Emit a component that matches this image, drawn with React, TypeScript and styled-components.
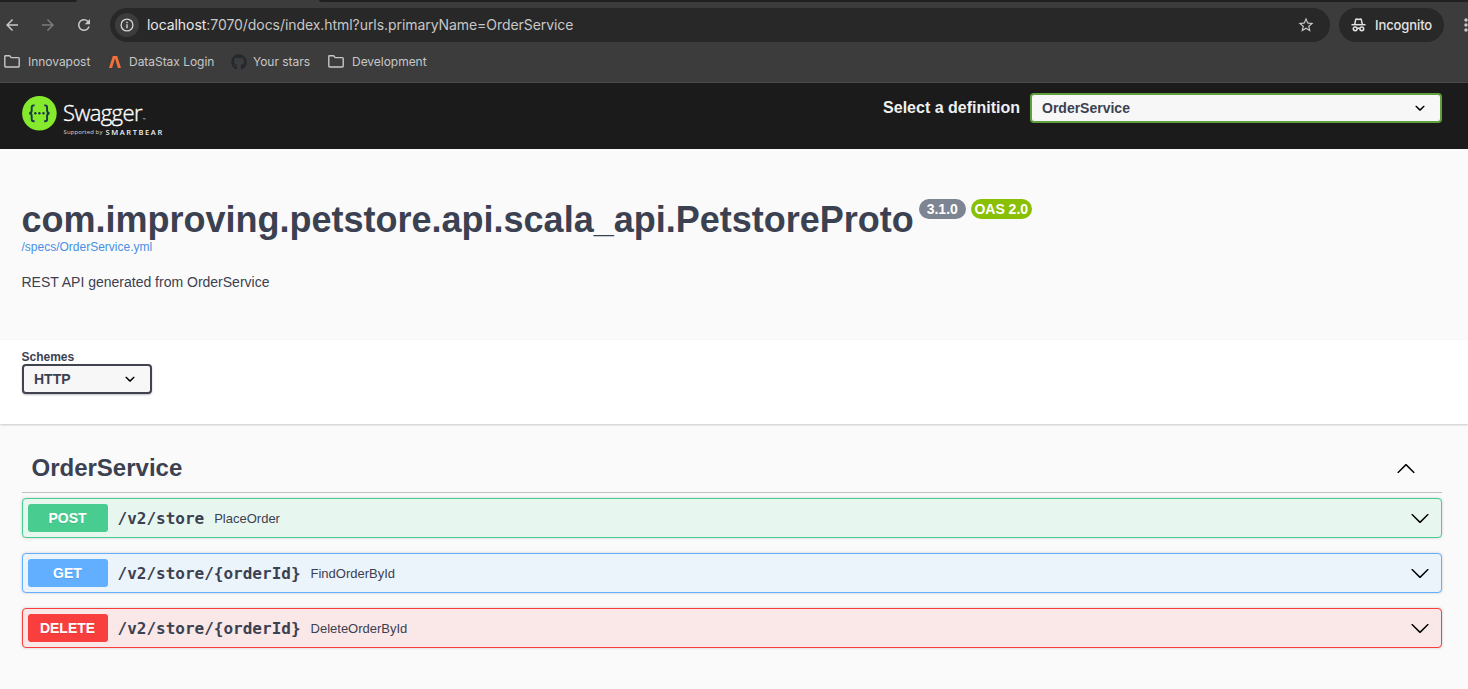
import React from "react";
import styled, { createGlobalStyle } from "styled-components";
import { FaGithub } from "react-icons/fa";
import { MdArrowBack, MdArrowForward, MdMoreVert, MdRefresh, MdStarBorder } from "react-icons/md";

const GlobalStyle = createGlobalStyle`
  *, *::before, *::after { box-sizing: border-box; }
  body {
    margin: 0;
    background: #fafafa;
    color: #3b4151;
    font-family: "Liberation Sans", Arial, sans-serif;
    overflow: hidden;
  }
  svg { display: block; flex: none; }
`;

const Page = styled.div`
  height: 689px;
  width: 1468px;
  overflow: hidden;
  display: flex;
  flex-direction: column;
`;

/* ---------- browser chrome ---------- */

const Chrome = styled.div`
  background: #3c3c3c;
  height: 83px;
  border-bottom: 1px solid #4b4b4b;
  color: #c7c7c7;
  font-family: Inter, Roboto, sans-serif;
  flex: none;
`;

const TabStrip = styled.div`
  display: flex;
  justify-content: space-between;
  height: 2px;
`;

const TabEdge = styled.div<{ $width: number; $side: "left" | "right" }>`
  width: ${(p) => p.$width}px;
  background: #202020;
  border-radius: ${(p) => (p.$side === "left" ? "0 0 4px 0" : "0 0 0 4px")};
`;

const Toolbar = styled.div`
  display: flex;
  align-items: center;
  height: 46px;
`;

const NavIcon = styled.span<{ $left: number; $dim?: boolean }>`
  flex: none;
  margin-left: ${(p) => p.$left}px;
  color: ${(p) => (p.$dim ? "#7b7b7b" : "#c7c7c7")};
`;

const AddressBar = styled.div`
  display: flex;
  flex: none;
  align-items: center;
  width: 1220px;
  height: 34px;
  margin-left: 17px;
  padding: 0 15px 0 5px;
  border-radius: 17px;
  background: #282828;
`;

const InfoBadge = styled.span`
  display: grid;
  place-items: center;
  width: 24px;
  height: 24px;
  border-radius: 50%;
  background: #3c3c3c;
`;

const Url = styled.span`
  flex: 1;
  margin-left: 8px;
  padding-bottom: 1px;
  font-size: 14px;
  letter-spacing: -0.06px;
  white-space: nowrap;
  b { font-weight: 400; color: #e8e8e8; }
`;

const IncognitoPill = styled.div`
  display: flex;
  flex: none;
  align-items: center;
  gap: 9px;
  width: 105px;
  height: 34px;
  margin-left: 9px;
  padding-left: 12px;
  border-radius: 17px;
  background: #282828;
  color: #e3e3e3;
  font-size: 13px;
  font-weight: 500;
  letter-spacing: -0.1px;
`;

const Bookmarks = styled.div`
  display: flex;
  align-items: center;
  height: 27px;
  padding-left: 4px;
`;

const Bookmark = styled.div<{ $width: number; $gap: number }>`
  display: flex;
  align-items: center;
  gap: ${(p) => p.$gap}px;
  width: ${(p) => p.$width}px;
  font-size: 12px;
  letter-spacing: -0.03px;
  white-space: nowrap;
`;

/* ---------- swagger ---------- */

const Topbar = styled.header`
  display: flex;
  justify-content: space-between;
  height: 66px;
  padding: 10px 26px 0 22px;
  background: #1b1b1b;
  flex: none;
`;

const Brand = styled.div`
  display: flex;
  padding-top: 3px;
`;

const BrandText = styled.div`
  display: flex;
  flex-direction: column;
  margin-left: 6px;
  padding-top: 1px;
  color: #fff;
  font-family: "Open Sans", sans-serif;
`;

const BrandName = styled.div`
  height: 31px;
  font-size: 22px;
  line-height: 30px;
  font-weight: 300;
  letter-spacing: -0.6px;
  -webkit-text-stroke: 0.35px #fff;
  white-space: nowrap;
  small { margin-left: 1px; font-size: 4px; letter-spacing: 0; -webkit-text-stroke: 0; }
`;

const BrandBy = styled.div`
  display: flex;
  align-items: center;
  height: 8px;
  padding-left: 0.5px;
  font-size: 6px;
  line-height: 8px;
  letter-spacing: 0.1px;
  white-space: nowrap;
  color: #d8d8d8;
  b { margin-left: 3px; font-size: 7.5px; letter-spacing: 1.6px; font-weight: 600; color: #f2f2f2; }
`;

const Definition = styled.label`
  display: flex;
  align-items: flex-start;
  gap: 10px;
  color: #f0f0f0;
  font-size: 16px;
  font-weight: 700;
  line-height: 29px;
  white-space: nowrap;
`;

const SelectBox = styled.div<{ $width: number; $border: string; $shadow?: boolean }>`
  display: flex;
  align-items: center;
  justify-content: space-between;
  width: ${(p) => p.$width}px;
  height: 30px;
  padding: 0 10px;
  border: 2px solid ${(p) => p.$border};
  border-radius: 4px;
  background: #f7f7f7;
  box-shadow: ${(p) => (p.$shadow ? "0 1px 2px rgba(0,0,0,.25)" : "none")};
  color: #3b4151;
  font-size: 14px;
  font-weight: 700;
  line-height: 26px;
`;

const Info = styled.section`
  height: 191px;
  padding: 50px 22px 0 21.5px;
  flex: none;
`;

const TitleRow = styled.div`
  display: flex;
  align-items: flex-start;
  height: 41px;
`;

const Title = styled.h2`
  margin: 0;
  font-size: 36px;
  line-height: 41px;
  font-weight: 700;
  white-space: nowrap;
`;

const Version = styled.span<{ $bg: string; $width: number; $left: number }>`
  width: ${(p) => p.$width}px;
  height: 20px;
  margin-left: ${(p) => p.$left}px;
  padding-right: 1px;
  border-radius: 10px;
  background: ${(p) => p.$bg};
  color: #fff;
  font-size: 14px;
  line-height: 20px;
  font-weight: 700;
  text-align: center;
  white-space: nowrap;
`;

const SpecLink = styled.a`
  display: block;
  height: 14px;
  color: #4990e2;
  font-size: 12px;
  line-height: 14px;
`;

const Description = styled.p`
  margin: 20px 0 0;
  font-size: 14px;
  line-height: 17px;
`;

const Schemes = styled.section`
  height: 84px;
  padding: 10px 22px 0;
  background: #fff;
  box-shadow: 0 1px 2px rgba(0, 0, 0, 0.2);
  flex: none;
`;

const SchemesLabel = styled.div`
  height: 14px;
  margin-left: -0.5px;
  font-size: 12px;
  line-height: 14px;
  font-weight: 700;
`;

const Operations = styled.main`
  padding: 20px 26px 0 22px;
`;

const TagHeader = styled.div`
  display: flex;
  align-items: center;
  justify-content: space-between;
  height: 49px;
  margin-bottom: 5px;
  padding: 0 26px 0 9.5px;
  border-bottom: 1px solid rgba(59, 65, 81, 0.3);
`;

const TagName = styled.h3`
  margin: 0;
  font-size: 24px;
  line-height: 28px;
`;

const OperationRow = styled.div<{ $color: string; $bg: string }>`
  display: flex;
  align-items: center;
  height: 40px;
  margin-bottom: 15px;
  padding: 0 11px 0 5px;
  border: 1px solid ${(p) => p.$color};
  border-radius: 4px;
  background: ${(p) => p.$bg};
  box-shadow: 0 0 3px rgba(0, 0, 0, 0.19);
`;

const Method = styled.span<{ $color: string }>`
  width: 80px;
  height: 28px;
  padding-right: 1px;
  border-radius: 3px;
  background: ${(p) => p.$color};
  color: #fff;
  font-size: 14px;
  line-height: 28px;
  font-weight: 700;
  text-align: center;
  text-shadow: 0 1px 0 rgba(0, 0, 0, 0.1);
`;

const Path = styled.span`
  margin-left: 9.5px;
  font-family: "DejaVu Sans Mono", monospace;
  font-size: 16px;
  font-weight: 700;
`;

const Summary = styled.span`
  flex: 1;
  margin-left: 10px;
  font-size: 13px;
`;

const FolderIcon = () => (
  <svg width="16" height="13" viewBox="0 0 16 13" fill="none" stroke="#c7c7c7" strokeWidth="1.4" strokeLinejoin="round">
    <path d="M.8 1.5Q.8.8 1.5.8H5.6L7.2 2.6H14.4Q15.2 2.6 15.2 3.4V11.3Q15.2 12 14.4 12H1.6Q.8 12 .8 11.3Z" />
  </svg>
);

const DataStaxIcon = () => (
  <svg width="12" height="12" viewBox="0 0 12 12">
    <path d="M0 12 3.8 0H8.2L12 12H8.9L6 2.3 3.1 12Z" fill="#f2703a" />
  </svg>
);

const InfoIcon = () => (
  <svg width="14" height="14" viewBox="0 0 14 14" fill="none" stroke="#d5d5d5">
    <circle cx="7" cy="7" r="5.9" strokeWidth="1.3" />
    <path d="M7 6.3V10.2M7 3.8V5.2" strokeWidth="1.4" />
  </svg>
);

const IncognitoIcon = () => (
  <svg width="15" height="14" viewBox="0 0 15 14" fill="none" stroke="#e3e3e3" strokeWidth="1.5">
    <path d="M.5 6.7H14.5" />
    <path d="M3.7 6.4 4.7 1.6Q4.9.8 5.6 1L7.5 1.5 9.4 1Q10.1.8 10.3 1.6L11.3 6.4" />
    <circle cx="4.2" cy="10.8" r="1.9" />
    <circle cx="10.8" cy="10.8" r="1.9" />
    <path d="M6 10.5Q7.5 9.8 9 10.5" />
  </svg>
);

const SwaggerMark = () => (
  <svg width="35" height="35" viewBox="0 0 35 35">
    <circle cx="17.4" cy="17.3" r="17.3" fill="#85ea2d" />
    <g fill="none" stroke="#173647" strokeWidth="1.9">
      <path d="M12.6 9.4H11.6Q9.7 9.4 9.7 11.4V14.6Q9.7 17.3 7.2 17.3 9.7 17.3 9.7 20V23.2Q9.7 25.3 11.6 25.3H12.6" />
      <path d="M22.2 9.4H23.2Q25.1 9.4 25.1 11.4V14.6Q25.1 17.3 27.6 17.3 25.1 17.3 25.1 20V23.2Q25.1 25.3 23.2 25.3H22.2" />
    </g>
    <g fill="#173647">
      <circle cx="13.3" cy="17.3" r="1.2" />
      <circle cx="17.4" cy="17.3" r="1.2" />
      <circle cx="21.5" cy="17.3" r="1.2" />
    </g>
  </svg>
);

const SelectArrow = () => (
  <svg width="20" height="20" viewBox="0 0 20 20">
    <path d="M13.418 7.859c.271-.268.709-.268.978 0 .27.268.272.701 0 .969l-3.908 3.83c-.27.268-.707.268-.979 0l-3.908-3.83c-.27-.267-.27-.701 0-.969.271-.268.709-.268.978 0L10 11l3.418-3.141z" />
  </svg>
);

const LargeArrow = ({ up = false }: { up?: boolean }) => (
  <svg width="20" height="20" viewBox="0 0 20 20">
    <path
      transform={up ? "rotate(180 10 10.5)" : undefined}
      d="M17.418 6.109c.272-.268.709-.268.979 0s.271.701 0 .969l-7.908 7.83c-.27.268-.707.268-.979 0l-7.908-7.83c-.27-.268-.27-.701 0-.969.271-.268.709-.268.979 0L10 13.25l7.418-7.141z"
    />
  </svg>
);

const operations = [
  { method: "POST", path: "/v2/store", summary: "PlaceOrder", color: "#49cc90", bg: "#e8f6f0" },
  { method: "GET", path: "/v2/store/{orderId}", summary: "FindOrderById", color: "#61affe", bg: "#ebf3fb" },
  { method: "DELETE", path: "/v2/store/{orderId}", summary: "DeleteOrderById", color: "#f93e3e", bg: "#fae7e7" },
];

export default function App() {
  return (
    <Page>
      <GlobalStyle />
      <Chrome>
        <TabStrip>
          <TabEdge $width={77} $side="left" />
          <TabEdge $width={1149} $side="right" />
        </TabStrip>
        <Toolbar>
          <NavIcon $left={3}><MdArrowBack size={18} /></NavIcon>
          <NavIcon $left={18} $dim><MdArrowForward size={18} /></NavIcon>
          <NavIcon $left={18}><MdRefresh size={18} /></NavIcon>
          <AddressBar>
            <InfoBadge><InfoIcon /></InfoBadge>
            <Url><b>localhost</b>:7070/docs/index.html?urls.primaryName=OrderService</Url>
            <MdStarBorder size={18} />
          </AddressBar>
          <IncognitoPill>
            <IncognitoIcon />
            Incognito
          </IncognitoPill>
          <NavIcon $left={12}><MdMoreVert size={20} /></NavIcon>
        </Toolbar>
        <Bookmarks>
          <Bookmark $width={105} $gap={8}><FolderIcon />Innovapost</Bookmark>
          <Bookmark $width={122} $gap={8}><DataStaxIcon />DataStax Login</Bookmark>
          <Bookmark $width={97} $gap={6}><FaGithub size={16} color="#24292f" />Your stars</Bookmark>
          <Bookmark $width={110} $gap={8}><FolderIcon />Development</Bookmark>
        </Bookmarks>
      </Chrome>

      <Topbar>
        <Brand>
          <SwaggerMark />
          <BrandText>
            <BrandName>Swagger<small>™</small></BrandName>
            <BrandBy>Supported by <b>SMARTBEAR</b></BrandBy>
          </BrandText>
        </Brand>
        <Definition>
          Select a definition
          <SelectBox $width={412} $border="#62a03f">OrderService<SelectArrow /></SelectBox>
        </Definition>
      </Topbar>

      <Info>
        <TitleRow>
          <Title>com.improving.petstore.api.scala_api.PetstoreProto</Title>
          <Version $bg="#7d8492" $width={47} $left={5.5}>3.1.0</Version>
          <Version $bg="#89bf04" $width={61} $left={5}>OAS 2.0</Version>
        </TitleRow>
        <SpecLink>/specs/OrderService.yml</SpecLink>
        <Description>REST API generated from OrderService</Description>
      </Info>

      <Schemes>
        <SchemesLabel>Schemes</SchemesLabel>
        <SelectBox $width={130} $border="#41444e" $shadow>HTTP<SelectArrow /></SelectBox>
      </Schemes>

      <Operations>
        <TagHeader>
          <TagName>OrderService</TagName>
          <LargeArrow up />
        </TagHeader>
        {operations.map((op) => (
          <OperationRow key={op.method} $color={op.color} $bg={op.bg}>
            <Method $color={op.color}>{op.method}</Method>
            <Path>{op.path}</Path>
            <Summary>{op.summary}</Summary>
            <LargeArrow />
          </OperationRow>
        ))}
      </Operations>
    </Page>
  );
}
